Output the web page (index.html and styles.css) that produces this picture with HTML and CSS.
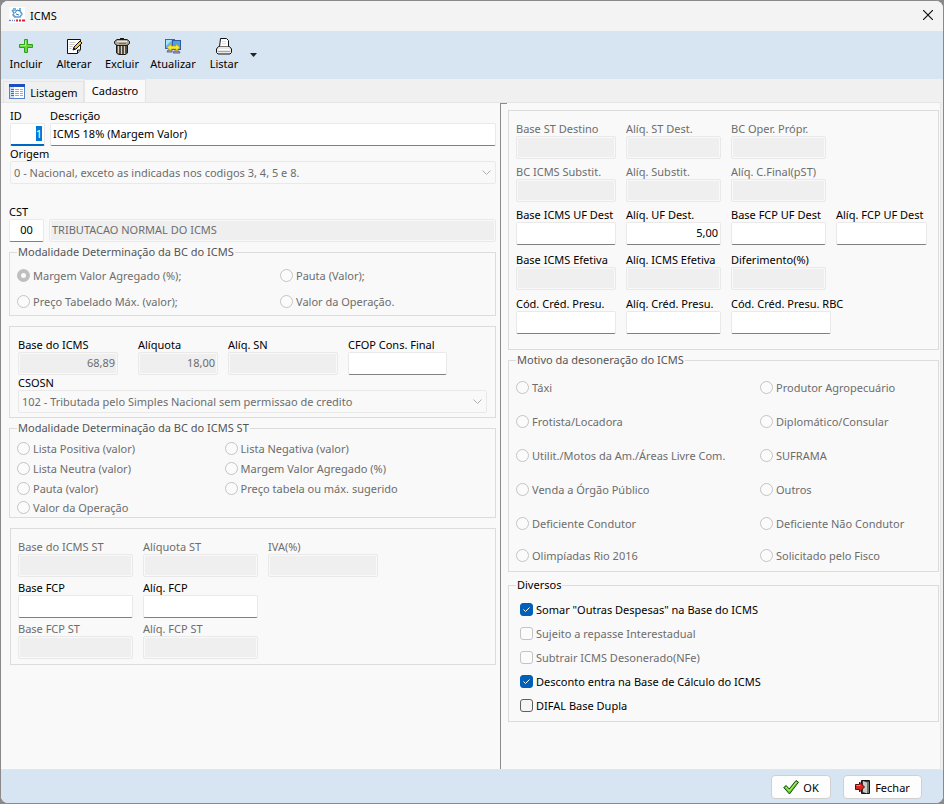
FILE: index.html
```
<!DOCTYPE html>
<html lang="pt-BR">
<head>
    <meta charset="UTF-8">
    <meta name="viewport" content="width=device-width, initial-scale=1.0">
    <title>ICMS</title>
    <link rel="stylesheet" href="styles.css">
</head>
<body>
<div class="window">
    <header class="titlebar">
        <svg width="16" height="16" viewBox="0 0 16 16">
            <rect width="16" height="16" fill="#fff"/>
            <path d="M4 1h3v3H4zM10 1h2v3h-2z" fill="#7db4da"/>
            <path d="M3 3l2 3-1 2 3 2h4l2-3-2-3" stroke="#5d9fd0" stroke-width="1.500" fill="none"/>
            <path d="M6 6l2-3 3 1M7 7l3 1" stroke="#2c78b5" fill="none"/>
            <path d="M5 10.500h6M4 9l2 2" stroke="#9db4c8" fill="none"/>
            <path d="M0 13.500h2M3 13.500h1M5 13.500h1" stroke="#7389bd" stroke-width="1.500"/>
            <path d="M7 13.500h2M10 13.500h2M13 13.500h3" stroke="#d5233d" stroke-width="2"/>
        </svg>
        <span class="title">ICMS</span>
        <button class="close-btn" aria-label="Fechar janela">
            <svg width="10" height="10" viewBox="0 0 10 10"><path d="M0 0l10 10M10 0L0 10" stroke="#111" stroke-width="1.200"/></svg>
        </button>
    </header>

    <div class="toolbar">
        <button class="tool">
            <svg width="18" height="18" viewBox="0 0 18 18"><path d="M7.500 2.500h3v5h5v3h-5v5h-3v-5h-5v-3h5z" fill="#6fd63f" stroke="#2aa01f"/><path d="M8.500 3.500v5h-5" stroke="#b2f08c" fill="none"/></svg>
            Incluir
        </button>
        <button class="tool">
            <svg width="18" height="18" viewBox="0 0 18 18">
                <path d="M2.500 2.500h13v10l-3 4h-10z" fill="#fff" stroke="#111"/>
                <path d="M12.500 16v-3h3" fill="#ccc" stroke="#111"/>
                <path d="M4.500 5.500h6M4.500 7.500h5M4.500 9.500h3M4.500 11.500h2" stroke="#c5c5c5"/>
                <path d="M8 13l1-3 6-6 2 2-6 6z" fill="#f5c043" stroke="#111"/><path d="M8 13l1-2.500 1.500 1.500z" fill="#111"/>
            </svg>
            Alterar
        </button>
        <button class="tool">
            <svg width="18" height="18" viewBox="0 0 18 18">
                <path d="M3.500 7h11v9l-2 1.500h-7l-2-1.500z" fill="#6f685c" stroke="#1b1916"/>
                <path d="M5.500 9v7M8.500 9v8M11.500 9v8" stroke="#d9d3c6"/><path d="M7 9v8M10 9v8M13 9v7" stroke="#3d3932"/>
                <path d="M4 2.500h10l2.500 2v2l-2.500 2H4l-2.500-2v-2z" fill="#b0a898" stroke="#1b1916"/>
                <path d="M4 4.500h10" stroke="#ece7da"/><path d="M6 6.500h7" stroke="#766e60"/><path d="M7 2h4" stroke="#1b1916" stroke-width="2"/>
            </svg>
            Excluir
        </button>
        <button class="tool tool-wide">
            <svg width="18" height="18" viewBox="0 0 18 18">
                <rect x="1.500" y="2.500" width="9" height="9" fill="#58b7ee" stroke="#3868b4"/>
                <rect x="8.500" y="3.500" width="8" height="9" fill="#4aa2e6" stroke="#3058a4"/>
                <path d="M2 3h6L2 9z" fill="#a9e2ff"/>
                <path d="M4 13h4v2H3zM10 14h5l1 2h-7z" fill="#9aa1b8" stroke="#606c92"/>
                <path d="M3 10.500l4-3.500v2h5V7l4 3.500-4 3.500v-2H7v2z" fill="#f7e832" stroke="#b79720" stroke-width=".6"/>
            </svg>
            Atualizar
        </button>
        <button class="tool">
            <svg width="18" height="18" viewBox="0 0 18 18">
                <path d="M4.500 10l1-8.500h6l2 2V10" fill="#fff" stroke="#111"/>
                <path d="M3.500 9.500h11l2 2.500v3.500l-1.500 1.500H3l-1.500-1.500V12z" fill="#e6e6e6" stroke="#111"/>
                <path d="M4.500 9.500h9" stroke="#777"/><path d="M3 12.500h12" stroke="#fff"/><path d="M3 14.500h12" stroke="#aaa"/><path d="M7 4.500h4M7 6.500h4" stroke="#ddd"/>
            </svg>
            Listar
        </button>
        <button class="tool-arrow" aria-label="Mais opções"><svg width="7" height="4" viewBox="0 0 7 4"><path d="M0 0h7L3.500 4z" fill="#222"/></svg></button>
    </div>

    <nav class="tabs">
        <button class="tab tab-list">
            <svg width="16" height="16" viewBox="0 0 16 16">
                <rect x=".5" y=".5" width="15" height="14" fill="#fff" stroke="#5583cb"/>
                <rect width="16" height="3" fill="#1d4fc0"/>
                <rect x="1" y="3" width="4" height="11" fill="#cfdff5"/>
                <path d="M2 5.500h3M2 7.500h3M2 9.500h3M2 11.500h3" stroke="#4d6ca8"/>
                <path d="M6 5.500h4M11 5.500h3M6 7.500h4M11 7.500h3M6 9.500h4M11 9.500h3M6 11.500h4M11 11.500h3" stroke="#a3abb8"/>
            </svg>
            Listagem
        </button>
        <button class="tab active">Cadastro</button>
    </nav>

    <main class="panel">
        <section class="left">
            <div class="row inset">
                <div class="field w-id"><label for="id">ID</label><input type="text" id="id" class="right-text current" value="1"></div>
                <div class="field grow"><label for="descricao">Descrição</label><input type="text" id="descricao" value="ICMS 18% (Margem Valor)"></div>
            </div>
            <div class="field inset">
                <label for="origem">Origem</label>
                <select id="origem" disabled><option>0 - Nacional, exceto as indicadas nos codigos 3, 4, 5 e 8.</option></select>
            </div>
            <div class="row cst">
                <div class="field w-id"><label for="cst">CST</label><input type="text" id="cst" class="center-text" value="00"></div>
                <input type="text" class="grow" aria-label="Descrição do CST" value="TRIBUTACAO NORMAL DO ICMS" disabled>
            </div>

            <fieldset class="group modalidade" disabled>
                <legend>Modalidade Determinação da BC do ICMS</legend>
                <label class="option"><input type="radio" name="modbc" checked>Margem Valor Agregado (%);</label>
                <label class="option"><input type="radio" name="modbc">Pauta (Valor);</label>
                <label class="option"><input type="radio" name="modbc">Preço Tabelado Máx. (valor);</label>
                <label class="option"><input type="radio" name="modbc">Valor da Operação.</label>
            </fieldset>

            <div class="box base">
                <div class="base-grid">
                    <div class="field"><label for="base">Base do ICMS</label><input type="text" id="base" class="right-text" value="68,89" disabled></div>
                    <div class="field"><label for="aliq">Alíquota</label><input type="text" id="aliq" class="right-text" value="18,00" disabled></div>
                    <div class="field"><label for="aliqsn">Alíq. SN</label><input type="text" id="aliqsn" disabled></div>
                    <div class="field"><label for="cfop">CFOP Cons. Final</label><input type="text" id="cfop"></div>
                </div>
                <div class="field">
                    <label for="csosn">CSOSN</label>
                    <select id="csosn" disabled><option>102 - Tributada pelo Simples Nacional sem permissao de credito</option></select>
                </div>
            </div>

            <fieldset class="group modalidade-st" disabled>
                <legend>Modalidade Determinação da BC do ICMS ST</legend>
                <label class="option"><input type="radio" name="modst">Lista Positiva (valor)</label>
                <label class="option"><input type="radio" name="modst">Lista Negativa (valor)</label>
                <label class="option"><input type="radio" name="modst">Lista Neutra (valor)</label>
                <label class="option"><input type="radio" name="modst">Margem Valor Agregado (%)</label>
                <label class="option"><input type="radio" name="modst">Pauta (valor)</label>
                <label class="option"><input type="radio" name="modst">Preço tabela ou máx. sugerido</label>
                <label class="option"><input type="radio" name="modst">Valor da Operação</label>
            </fieldset>

            <div class="box st-grid">
                <div class="field off"><label for="basest">Base do ICMS ST</label><input type="text" id="basest" disabled></div>
                <div class="field off"><label for="aliqst">Alíquota ST</label><input type="text" id="aliqst" disabled></div>
                <div class="field off"><label for="iva">IVA(%)</label><input type="text" id="iva" disabled></div>
                <div class="field first"><label for="basefcp">Base FCP</label><input type="text" id="basefcp"></div>
                <div class="field"><label for="aliqfcp">Alíq. FCP</label><input type="text" id="aliqfcp"></div>
                <div class="field off first"><label for="basefcpst">Base FCP ST</label><input type="text" id="basefcpst" disabled></div>
                <div class="field off"><label for="aliqfcpst">Alíq. FCP ST</label><input type="text" id="aliqfcpst" disabled></div>
            </div>
        </section>

        <section class="right">
            <div class="box dest-grid">
                <div class="field off"><label for="d1">Base ST Destino</label><input type="text" id="d1" disabled></div>
                <div class="field off"><label for="d2">Alíq. ST Dest.</label><input type="text" id="d2" disabled></div>
                <div class="field off"><label for="d3">BC Oper. Própr.</label><input type="text" id="d3" disabled></div>
                <div class="field off first"><label for="d4">BC ICMS Substit.</label><input type="text" id="d4" disabled></div>
                <div class="field off"><label for="d5">Alíq. Substit.</label><input type="text" id="d5" disabled></div>
                <div class="field off"><label for="d6">Alíq. C.Final(pST)</label><input type="text" id="d6" disabled></div>
                <div class="field first"><label for="d7">Base ICMS UF Dest</label><input type="text" id="d7"></div>
                <div class="field"><label for="d8">Alíq. UF Dest.</label><input type="text" id="d8" class="right-text" value="5,00"></div>
                <div class="field"><label for="d9">Base FCP UF Dest</label><input type="text" id="d9"></div>
                <div class="field"><label for="d10">Alíq. FCP UF Dest</label><input type="text" id="d10"></div>
                <div class="field first"><label for="d11">Base ICMS Efetiva</label><input type="text" id="d11" disabled></div>
                <div class="field"><label for="d12">Alíq. ICMS Efetiva</label><input type="text" id="d12" disabled></div>
                <div class="field"><label for="d13">Diferimento(%)</label><input type="text" id="d13" disabled></div>
                <div class="field first"><label for="d14">Cód. Créd. Presu.</label><input type="text" id="d14"></div>
                <div class="field"><label for="d15">Alíq. Créd. Presu.</label><input type="text" id="d15"></div>
                <div class="field rbc"><label for="d16">Cód. Créd. Presu. RBC</label><input type="text" id="d16"></div>
            </div>

            <fieldset class="group motivo" disabled>
                <legend>Motivo da desoneração do ICMS</legend>
                <label class="option"><input type="radio" name="motivo">Táxi</label>
                <label class="option"><input type="radio" name="motivo">Produtor Agropecuário</label>
                <label class="option"><input type="radio" name="motivo">Frotista/Locadora</label>
                <label class="option"><input type="radio" name="motivo">Diplomático/Consular</label>
                <label class="option"><input type="radio" name="motivo">Utilit./Motos da Am./Áreas Livre Com.</label>
                <label class="option"><input type="radio" name="motivo">SUFRAMA</label>
                <label class="option"><input type="radio" name="motivo">Venda a Órgão Público</label>
                <label class="option"><input type="radio" name="motivo">Outros</label>
                <label class="option"><input type="radio" name="motivo">Deficiente Condutor</label>
                <label class="option"><input type="radio" name="motivo">Deficiente Não Condutor</label>
                <label class="option"><input type="radio" name="motivo">Olimpíadas Rio 2016</label>
                <label class="option"><input type="radio" name="motivo">Solicitado pelo Fisco</label>
            </fieldset>

            <fieldset class="group diversos">
                <legend>Diversos</legend>
                <label class="option"><input type="checkbox" checked>Somar "Outras Despesas" na Base do ICMS</label>
                <label class="option off"><input type="checkbox" disabled>Sujeito a repasse Interestadual</label>
                <label class="option off"><input type="checkbox" disabled>Subtrair ICMS Desonerado(NFe)</label>
                <label class="option"><input type="checkbox" checked>Desconto entra na Base de Cálculo do ICMS</label>
                <label class="option"><input type="checkbox">DIFAL Base Dupla</label>
            </fieldset>
        </section>
    </main>

    <footer class="footer">
        <button class="btn">
            <svg width="16" height="16" viewBox="0 0 16 16"><path d="M.7 8.500l2.500-2 3 3.500L13 1.500l2.500 1.700L6.500 15z" fill="#62cf2b" stroke="#174d0c"/><path d="M3 8l3.300 4L13.500 3" stroke="#b4f283" fill="none"/></svg>
            OK
        </button>
        <button class="btn btn-wide">
            <svg width="16" height="16" viewBox="0 0 16 16">
                <path d="M6.500 1.500h8v13h-8z" fill="#3a3f3a" stroke="#111"/>
                <path d="M8 2l4 1.500v11L8 13z" fill="#c9cdc9"/><path d="M12 3h2v11h-2z" fill="#6d7a6d"/>
                <path d="M.5 5.500h4V3l5 5-5 5v-2.500h-4z" fill="#d5291f" stroke="#5d0d08"/><path d="M1.500 6.500h4" stroke="#f58c80"/>
            </svg>
            Fechar
        </button>
    </footer>
</div>

<script>
    // start with the ID ready to be typed over
    const idInput = document.getElementById('id');
    idInput.focus();
    idInput.select();
</script>
</body>
</html>
```
FILE: styles.css
```
* {
    box-sizing: border-box;
}
body {
    margin: 0;
    background-color: #8b8889;
    font-family: "Noto Sans", "Segoe UI", sans-serif;
    font-size: 11px;
    color: #000;
}
button, input, select {
    font: inherit;
    color: inherit;
}
button {
    border: none;
    background: none;
    padding: 0;
}
.window {
    display: flex;
    flex-direction: column;
    min-height: 100vh;
    border: 1px solid #8b8889;
    border-radius: 8px;
    overflow: hidden;
    background-color: #f0f0f0;
}
.titlebar {
    display: flex;
    align-items: center;
    gap: 5px;
    height: 30px;
    padding: 0 10px 2px 8px;
    background-color: #f3f3f3;
}
.title {
    flex: 1;
}
.close-btn {
    display: flex;
    padding: 0;
}
.toolbar {
    display: flex;
    height: 48px;
    padding-left: 1px;
    background-color: #d7e4f2;
}
.tool {
    display: flex;
    flex-direction: column;
    align-items: center;
    width: 48px;
    padding-top: 6px;
    line-height: 18px;
}
.tool-wide {
    width: 54px;
}
.tool-arrow {
    width: 10px;
    padding-bottom: 6px;
}
.tabs {
    display: flex;
    align-items: flex-end;
    height: 23px;
    padding-left: 2px;
}
.tab {
    display: flex;
    align-items: center;
    justify-content: center;
    min-width: 62px;
    height: 23px;
    padding: 0 4px 2px;
    border: 1px solid #e5e5e5;
    border-bottom: none;
}
.tab-list {
    gap: 5px;
    min-width: 81px;
    height: 21px;
    padding-bottom: 0;
}
.tab.active {
    background-color: #f9f9f9;
}
.panel {
    flex: 1;
    display: grid;
    grid-template-columns: 499fr 440fr;
    margin-right: 2px;
    border: 1px solid #e5e5e5;
    border-left: none;
    background-color: #f9f9f9;
}
.left {
    padding: 5px 4px 0 8px;
}
.right {
    padding: 7px 1px 0 7px;
    border-left: 1px solid #8b8b8b;
    background: linear-gradient(#8b8b8b, #8b8b8b) no-repeat 0 0 / 6px 1px;
}
.row {
    display: flex;
    align-items: flex-end;
    gap: 5px;
}
.inset {
    margin-left: 1px;
}
.grow {
    flex: 1;
}
.w-id {
    width: 35px;
}
.cst {
    margin-top: 20px;
}

/* fields */
.field {
    display: flex;
    flex-direction: column;
    min-width: 0;
}
.field label {
    line-height: 15px;
    white-space: nowrap;
}
.off {
    color: #6d6d6d;
}
input[type="text"], select {
    width: 100%;
    min-width: 0;
    height: 23px;
    padding: 0 2px 2px;
    border: 1px solid #e9e9e9;
    border-radius: 2px;
    outline: none;
    background-color: #fff;
}
input[type="text"]:enabled {
    border-bottom-color: #808080;
}
input[type="text"].current {
    border-bottom: 2px solid #0067c0;
}
input[type="text"]:disabled {
    background-color: #efefef;
    box-shadow: inset 0 0 0 1px #f9f9f9;
    color: #6d6d6d;
}
input::selection {
    background-color: #0078d7;
    color: #fff;
}
select {
    appearance: none;
    padding: 0 20px 0 3px;
    background: url("data:image/svg+xml,%3Csvg xmlns='http://www.w3.org/2000/svg' width='9' height='5'%3E%3Cpath d='M.5.5l4 4 4-4' fill='none' stroke='%23b0b0b0'/%3E%3C/svg%3E") no-repeat right 4px center;
}
select:disabled {
    color: #6d6d6d;
    opacity: 1;
}
.right-text {
    text-align: right;
}
.center-text {
    text-align: center;
}

/* boxes and groups */
.box {
    border: 1px solid #dcdcdc;
}
.group {
    display: grid;
    min-width: 0;
    margin: 2px 0 0;
    padding: 2px 7px 1px;
    border: 1px solid #dcdcdc;
}
.group legend {
    padding: 0 1px;
    line-height: 16px;
}
.group:disabled {
    color: #6d6d6d;
}
.group:disabled legend {
    color: #555;
}
.option {
    display: flex;
    align-items: center;
    gap: 3px;
    white-space: nowrap;
}
.option input {
    appearance: none;
    flex: none;
    width: 13px;
    height: 13px;
    margin: 0;
    border: 1px solid #606060;
    border-radius: 3px;
    background-color: #f5f5f5;
}
.option input:disabled {
    border-color: #c4c4c4;
    background-color: #fbfbfb;
}
.option input[type="radio"] {
    border-radius: 50%;
}
.option input[type="radio"]:checked {
    border: 4px solid #bfbfbf;
}
.option input[type="checkbox"]:checked {
    border-color: #005fb8;
    background: #005fb8 url("data:image/svg+xml,%3Csvg xmlns='http://www.w3.org/2000/svg' width='11' height='11'%3E%3Cpath d='M2.500 5.500l2 2 4-4' fill='none' stroke='white'/%3E%3C/svg%3E");
}
.modalidade {
    grid-template-columns: 263fr 208fr;
    grid-auto-rows: 26px;
}
.base {
    margin-top: 10px;
    padding: 10px 8px 4px;
}
.base-grid {
    display: grid;
    grid-template-columns: 100fr 0 80fr 110fr 99fr 30fr;
    column-gap: 10px;
}
.base-grid .field:nth-child(2) {
    grid-column: 3;
}
.modalidade-st {
    grid-template-columns: 208fr 264fr;
    grid-template-rows: 20px 20px 20px 18px;
}
.st-grid {
    display: grid;
    grid-template-columns: 115fr 115fr 110fr 100fr;
    gap: 3px 10px;
    margin-top: 10px;
    margin-left: 1px;
    padding: 10px 7px 5px;
}
/* the last column is empty, its gap still counts */
.st-grid::after {
    content: "";
    grid-column: 4;
}
.first {
    grid-column: 1;
}
.dest-grid {
    display: grid;
    grid-template-columns: 100fr 95fr 95fr 91fr;
    grid-template-rows: 43px 43px 45px 44px 38px;
    column-gap: 10px;
    padding: 10px 11px 15px 7px;
}
.rbc {
    grid-column: 3 / 5;
}
.rbc input[type="text"] {
    width: 100px;
}
.motivo {
    grid-template-columns: 244fr 171fr;
    grid-template-rows: repeat(5, 34px) 30px;
}
.diversos {
    grid-auto-rows: 24px;
    margin-top: 5px;
    padding-top: 4px;
    padding-bottom: 4px;
}
.diversos .option {
    padding-left: 4px;
}

.footer {
    display: flex;
    justify-content: flex-end;
    gap: 12px;
    padding: 5px 21px 4px 0;
    background-color: #d7e4f2;
}
.btn {
    display: flex;
    align-items: center;
    justify-content: center;
    gap: 4px;
    min-width: 60px;
    height: 24px;
    padding: 0 8px;
    border: 1px solid #d0d0d0;
    border-radius: 4px;
    background-color: #fdfdfd;
}
.btn-wide {
    min-width: 79px;
}
```
